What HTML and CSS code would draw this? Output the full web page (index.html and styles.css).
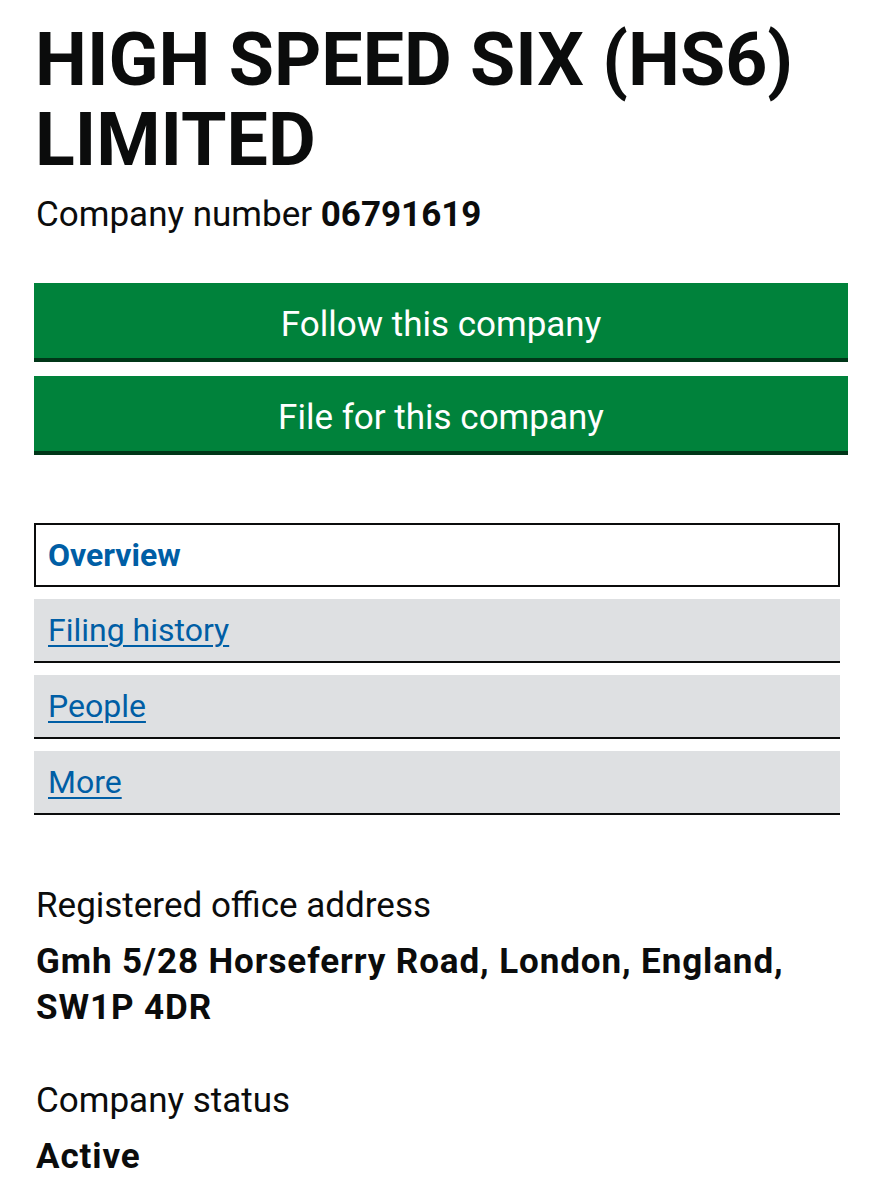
FILE: index.html
```html
<!DOCTYPE html>
<html lang="en">
<head>
    <meta charset="UTF-8">
    <meta name="viewport" content="width=device-width, initial-scale=1.0">
    <title>HIGH SPEED SIX (HS6) LIMITED - Overview</title>
    <link rel="stylesheet" href="styles.css">
</head>
<body>
    <main class="container">
        <h1 class="company-name">HIGH SPEED SIX (HS6) LIMITED</h1>
        <p class="company-number">Company number <strong>06791619</strong></p>

        <div class="actions">
            <a href="#" class="button">Follow this company</a>
            <a href="#" class="button">File for this company</a>
        </div>

        <ul class="tabs">
            <li class="tab active"><a href="#">Overview</a></li>
            <li class="tab"><a href="#">Filing history</a></li>
            <li class="tab"><a href="#">People</a></li>
            <li class="tab"><a href="#">More</a></li>
        </ul>

        <dl class="details">
            <dt>Registered office address</dt>
            <dd class="address">Gmh 5/28 Horseferry Road, London, England, SW1P 4DR</dd>
            <dt>Company status</dt>
            <dd>Active</dd>
        </dl>
    </main>
</body>
</html>
```

FILE: styles.css
```css
:root {
    --text: #0b0c0c;
    --green: #00823b;
    --green-shadow: #003618;
    --link: #005ea5;
    --grey: #dee0e2;
}

* {
    margin: 0;
    padding: 0;
    box-sizing: border-box;
}

body {
    font-family: Roboto, "Liberation Sans", sans-serif;
    color: var(--text);
    background: #fff;
}

.container {
    padding: 20px 34px 0 34px;
}

.company-name {
    font-size: 73.5px;
    line-height: 80px;
    font-weight: 700;
    padding-left: 1px;
}

.company-number {
    font-size: 35px;
    line-height: 42px;
    margin-top: 14px;
    padding-left: 2px;
}

.company-number strong {
    font-weight: 700;
}

.actions {
    margin-top: 47px;
    display: flex;
    flex-direction: column;
    gap: 14px;
}

.button {
    display: block;
    height: 79px;
    padding: 21px 0 16px;
    line-height: 42px;
    background: var(--green);
    box-shadow: inset 0 -4px 0 var(--green-shadow);
    color: #fff;
    text-align: center;
    font-size: 35px;
    text-decoration: none;
}

.tabs {
    list-style: none;
    margin-top: 68px;
    margin-right: 8px;
    display: flex;
    flex-direction: column;
    gap: 12px;
}

.tab {
    height: 64px;
    background: var(--grey);
    border-bottom: 2px solid var(--text);
    padding: 0 14px;
    display: flex;
    align-items: center;
}

.tab a {
    color: var(--link);
    font-size: 32px;
    text-decoration: underline;
    text-underline-offset: 4px;
    text-decoration-thickness: 2px;
}

.tab.active {
    background: #fff;
    border: 2px solid var(--text);
    padding-left: 12px;
}

.tab.active a {
    font-weight: 700;
    text-decoration: none;
}

.details {
    margin-top: 70px;
    padding-left: 2px;
}

.details dt {
    font-size: 35px;
    line-height: 42px;
}

.details dd {
    font-size: 35px;
    line-height: 46px;
    font-weight: 700;
    letter-spacing: 0.9px;
    margin-top: 12px;
    margin-bottom: 49px;
}

.details .address {
    max-width: 790px;
}
```
